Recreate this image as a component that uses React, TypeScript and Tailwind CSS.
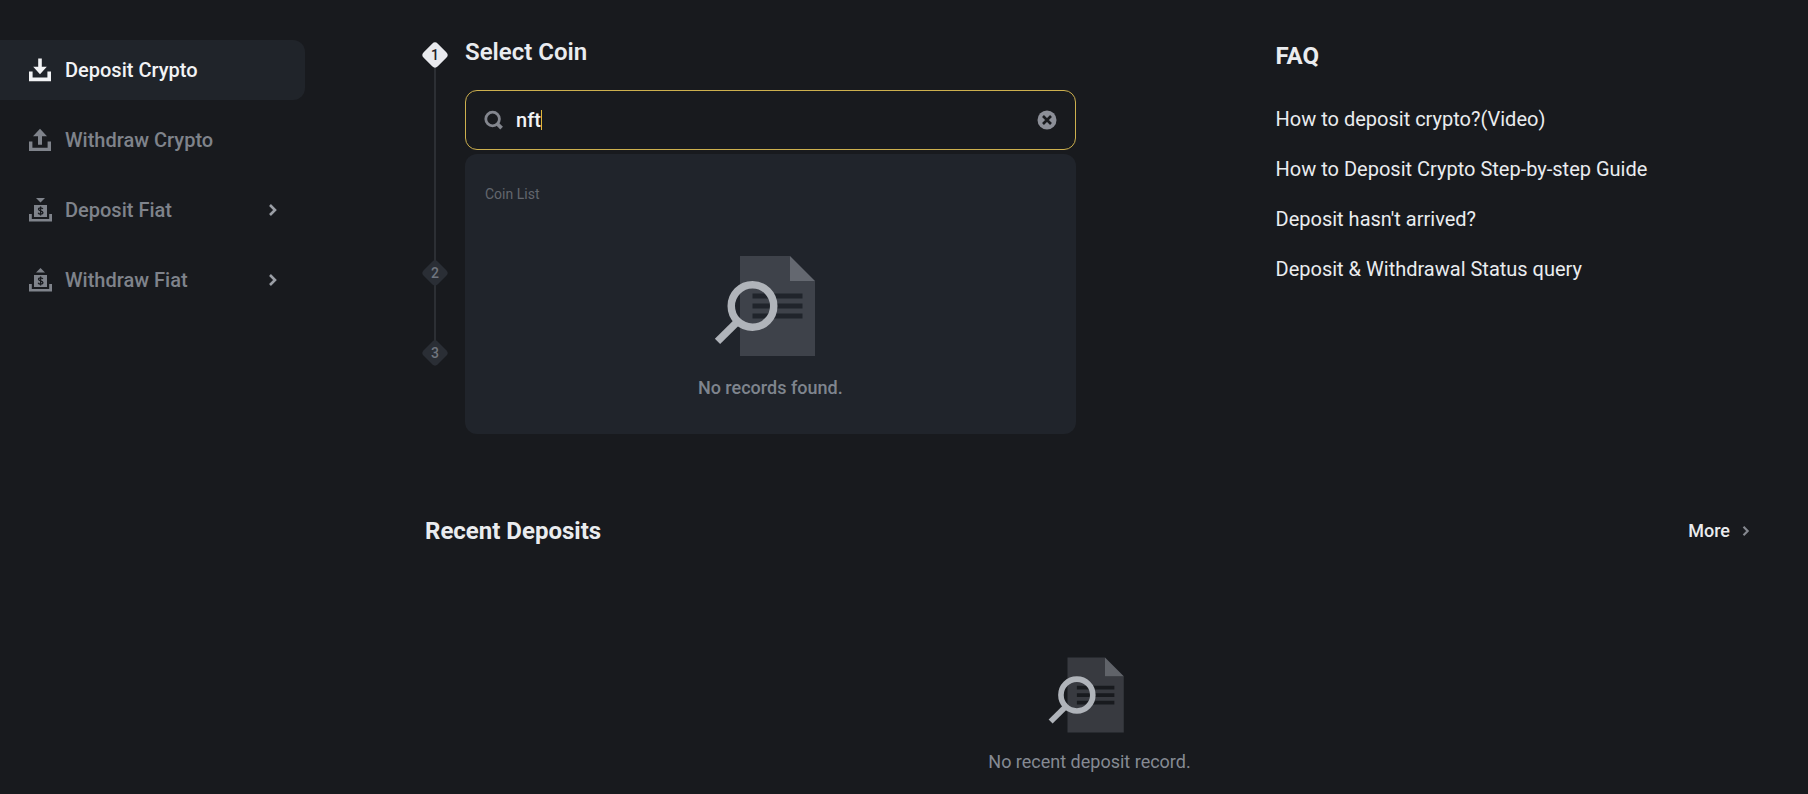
import { useState } from "react";
import clsx from "clsx";

interface NavItem {
  id: string;
  label: string;
  icon: "deposit" | "withdraw" | "deposit-fiat" | "withdraw-fiat";
  selected?: boolean;
  expandable?: boolean;
}

const navItems: NavItem[] = [
  { id: "deposit-crypto", label: "Deposit Crypto", icon: "deposit", selected: true },
  { id: "withdraw-crypto", label: "Withdraw Crypto", icon: "withdraw" },
  { id: "deposit-fiat", label: "Deposit Fiat", icon: "deposit-fiat", expandable: true },
  { id: "withdraw-fiat", label: "Withdraw Fiat", icon: "withdraw-fiat", expandable: true },
];

const faqLinks = [
  "How to deposit crypto?(Video)",
  "How to Deposit Crypto Step-by-step Guide",
  "Deposit hasn't arrived?",
  "Deposit & Withdrawal Status query",
];

function NavIcon({ icon }: { icon: NavItem["icon"] }) {
  const fiat = icon === "deposit-fiat" || icon === "withdraw-fiat";

  return (
    <svg viewBox="0 0 24 24" className="size-6 shrink-0" fill="currentColor" aria-hidden="true">
      {icon === "deposit" && (
        <path d="M10.2 0.5h3.6v8.3h5L12 16.2 5.2 8.8h5zM1 13.6h3.6v6h14.8v-6H23v9.6H1z" />
      )}
      {icon === "withdraw" && (
        <path d="M12 0.8l7 7.400h-5v8.600h-4V8.200H5zM1 13.600h3.400v6.100h15.200v-6.100H23v9.500H1z" />
      )}
      {fiat && (
        <>
          {icon === "deposit-fiat" ? <path d="M8 0h9l-4.5 4.4z" /> : <path d="M8 4.4h9L12.5 0z" />}
          <path d="M1 16h2.800v5h17.400v-5H24v7.400H1z" />
          <path d="M6 7h13v12H6z" />
          <path
            d="M14.8 11c-.3-.8-1.100-1.200-2.200-1.200-1.300 0-2.100.6-2.100 1.500 0 2.200 4.400 1 4.400 3.300 0 1-.9 1.600-2.300 1.600-1.200 0-2.100-.5-2.400-1.400M12.600 8.500v9"
            className="fill-none stroke-[#181a1e]"
            strokeWidth="1.300"
          />
        </>
      )}
    </svg>
  );
}

function Chevron({ className }: { className?: string }) {
  return (
    <svg viewBox="0 0 8 12" className={className} fill="none" stroke="currentColor" strokeWidth="2.600" aria-hidden="true">
      <path d="M1 1l5 5-5 5" />
    </svg>
  );
}

function EmptyIllustration({ className }: { className?: string }) {
  return (
    <svg viewBox="0 0 96 96" className={className} aria-hidden="true">
      <path
        fillRule="evenodd"
        d="M24 8h40v20h20v60H24zM34 38v4h40v-4zM34 46v4h40v-4zM34 54v4h40v-4z"
        className="fill-[#b7bdc6]/20"
      />
      <path d="M64 8l20 20H64z" className="fill-[#b7bdc6]/45" />
      <circle cx="34" cy="48" r="17" fill="none" strokeWidth="6" className="stroke-[#b0b4ba]" />
      <path d="M22 60.500L6 76.300" fill="none" strokeWidth="6" className="stroke-[#b0b4ba]" />
    </svg>
  );
}

function StepMarker({ step, active }: { step: number; active?: boolean }) {
  return (
    <div className="relative z-10 flex size-5 items-center justify-center">
      <div className={clsx("absolute inset-0 rotate-45 rounded-sm", active ? "bg-[#e9eaee]" : "bg-[#2a2e35]")} />
      <span
        className={clsx("relative text-sm leading-none font-medium", active ? "text-[#1e2026]" : "text-[#70757e]")}
      >
        {step}
      </span>
    </div>
  );
}

function Sidebar() {
  return (
    <nav className="flex w-[305px] shrink-0 flex-col gap-2.5 pt-10">
      {navItems.map((item) => (
        <a
          key={item.id}
          href={`#${item.id}`}
          className={clsx(
            "flex h-15 items-center gap-[13px] rounded-r-xl pr-7 pl-7 text-xl font-medium",
            item.selected ? "bg-[#20242a] text-[#f2f3f5]" : "text-[#7f838b]",
          )}
        >
          <NavIcon icon={item.icon} />
          <span className="flex-1">{item.label}</span>
          {item.expandable && <Chevron className="h-3 w-2 text-[#9b9fa6]" />}
        </a>
      ))}
    </nav>
  );
}

function CoinPicker() {
  const [query, setQuery] = useState("nft");

  return (
    <div className="relative">
      <div className="flex h-15 items-center rounded-xl border border-[#cdb04e] px-[18px]">
        <label className="flex flex-1 cursor-text items-center">
          <svg viewBox="0 0 20 20" className="mr-3 size-5 shrink-0 text-[#83868e]" fill="none" stroke="currentColor" aria-hidden="true">
            <circle cx="8.600" cy="9" r="6.800" strokeWidth="2.800" />
            <path d="M13 13.500l4.600 4.600" strokeWidth="3.800" />
          </svg>
          <input
            aria-label="Search coin"
            value={query}
            onChange={(e) => setQuery(e.target.value)}
            spellCheck={false}
            autoComplete="off"
            className="field-sizing-content text-xl font-medium text-[#f2f3f5] caret-transparent outline-none"
          />
          <span className="h-5 w-px bg-[#e0b83c]" />
        </label>
        <button type="button" aria-label="Clear" onClick={() => setQuery("")}>
          <svg viewBox="0 0 20 20" className="size-5" aria-hidden="true">
            <circle cx="10" cy="10" r="9.500" className="fill-[#8c8f98]" />
            <path d="M6 6l8 8M14 6l-8 8" strokeWidth="2.600" className="stroke-[#181a1e]" />
          </svg>
        </button>
      </div>

      <div className="absolute inset-x-0 top-full z-20 mt-1 rounded-xl bg-[#20242b] px-5 pt-[30px] pb-8">
        <div className="text-sm text-[#63676e]">Coin List</div>
        <div className="flex flex-col items-center pt-[42px]">
          <EmptyIllustration className="size-[120px]" />
          <p className="mt-2 text-lg font-medium text-[#7f858e]">No records found.</p>
        </div>
      </div>
    </div>
  );
}

export default function App() {
  return (
    <div className="flex min-h-screen bg-[#181a1e] font-[Roboto,'Noto_Sans',sans-serif] text-[#eaecef]">
      <Sidebar />

      <main className="min-w-0 flex-1 pt-9 pr-[54px] pl-30">
        <div className="grid grid-cols-[650fr_478fr] gap-[200px]">
          <section className="flex gap-5">
            <div className="flex flex-col items-center pt-[9px]">
              <StepMarker step={1} active />
              <div className="h-[198px] w-0.5 bg-[#2c2f34]" />
              <StepMarker step={2} />
              <div className="h-15 w-0.5 bg-[#2c2f34]" />
              <StepMarker step={3} />
            </div>
            <div className="min-w-0 flex-1">
              <h1 className="text-2xl font-semibold">Select Coin</h1>
              <div className="pt-[22px]">
                <CoinPicker />
              </div>
            </div>
          </section>

          <section className="pt-1">
            <h2 className="text-2xl font-bold">FAQ</h2>
            <ul className="flex flex-col gap-[22px] pt-[33px]">
              {faqLinks.map((link) => (
                <li key={link}>
                  <a href="#faq" className="block text-xl">
                    {link}
                  </a>
                </li>
              ))}
            </ul>
          </section>
        </div>

        <section className="pt-[152px] pb-3">
          <div className="flex items-center justify-between">
            <h2 className="text-2xl font-bold">Recent Deposits</h2>
            <a href="#history" className="flex items-center gap-3 pr-1 text-lg font-medium">
              More
              <Chevron className="h-2.5 w-2 text-[#85888f]" />
            </a>
          </div>
          <div className="flex flex-col items-center pt-[103px]">
            <EmptyIllustration className="size-[90px]" />
            <p className="mt-2 text-lg text-[#858a93]">No recent deposit record.</p>
          </div>
        </section>
      </main>
    </div>
  );
}
